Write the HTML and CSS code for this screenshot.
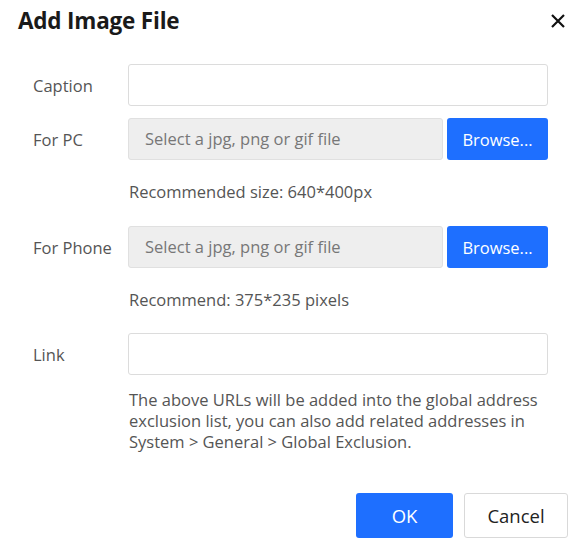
FILE: index.html
```html
<!DOCTYPE html>
<html>
<head>
<meta charset="utf-8">
<link rel="stylesheet" href="styles.css">
</head>
<body>
<div class="dialog">
  <div class="header">
    <h1 class="title">Add Image File</h1>
    <button class="close" aria-label="Close">
      <svg width="14" height="14" viewBox="0 0 14 14"><path d="M1 1L13 13M13 1L1 13" stroke="#111" stroke-width="2.2" stroke-linecap="butt"/></svg>
    </button>
  </div>
  <div class="form">
    <div class="row">
      <label class="label">Caption</label>
      <div class="field"><div class="input"></div></div>
    </div>
    <div class="row">
      <label class="label">For PC</label>
      <div class="field">
        <div class="file">
          <div class="input file-input">Select a jpg, png or gif file</div>
          <button class="btn primary browse">Browse...</button>
        </div>
        <div class="hint">Recommended size: 640*400px</div>
      </div>
    </div>
    <div class="row phone">
      <label class="label">For Phone</label>
      <div class="field">
        <div class="file">
          <div class="input file-input">Select a jpg, png or gif file</div>
          <button class="btn primary browse">Browse...</button>
        </div>
        <div class="hint">Recommend: 375*235 pixels</div>
      </div>
    </div>
    <div class="row link">
      <label class="label">Link</label>
      <div class="field">
        <div class="input"></div>
        <div class="help">The above URLs will be added into the global address exclusion list, you can also add related addresses in System &gt; General &gt; Global Exclusion.</div>
      </div>
    </div>
  </div>
  <div class="footer">
    <button class="btn primary ok">OK</button>
    <button class="btn cancel">Cancel</button>
  </div>
</div>
</body>
</html>
```
FILE: styles.css
```css
* { box-sizing: border-box; }
html, body { margin: 0; padding: 0; background: #fff; }
body { font-family: "Open Sans", "Noto Sans", sans-serif; color: #555; }
.dialog { width: 585px; height: 551px; padding: 0 17px 0 0; }
.header { display: flex; justify-content: space-between; align-items: center; height: 42px; padding-left: 18px; }
.title { margin: 0; font-size: 22.5px; font-weight: 700; color: #1a1a1a; letter-spacing: -0.2px; line-height: 1; }
.close { border: 0; background: none; padding: 0; width: 14px; height: 14px; margin-right: 3px; display: flex; }
.form { padding-top: 22px; padding-right: 20px; }
.row { display: flex; align-items: flex-start; margin-bottom: 12px; }
.row.phone { margin-top: 23px; margin-bottom: 0; }
.row.link { margin-top: 22px; }
.label { width: 128px; height: 42px; padding-left: 33px; padding-top: 1px; font-size: 16.5px; line-height: 42px; color: #555; }
.field { flex: 1; }
.input { height: 42px; border: 1px solid #dcdcdc; border-radius: 3px; background: #fff; }
.file { display: flex; gap: 4px; }
.file-input { flex: 1; background: #eee; border-color: #e0e0e0; color: #777; font-size: 16.5px; line-height: 40px; padding-left: 16px; }
.btn { font-family: inherit; font-size: 16.5px; border-radius: 3px; cursor: pointer; }
.primary { background: #1e6fff; color: #fff; border: 0; }
.browse { width: 101px; height: 42px; padding: 0; }
.hint { margin-top: 21px; line-height: 22px; font-size: 16.5px; padding-left: 1px; color: #555; }
.help { margin-top: 14px; font-size: 16.5px; line-height: 21px; padding-left: 1px; color: #555; }
.footer { display: flex; justify-content: flex-end; gap: 11px; margin-top: 41px; }
.ok { width: 97px; height: 45px; font-size: 18.5px; }
.cancel { width: 104px; height: 45px; background: #fff; border: 1px solid #d9d9d9; color: #222; font-size: 18.5px; }
```
